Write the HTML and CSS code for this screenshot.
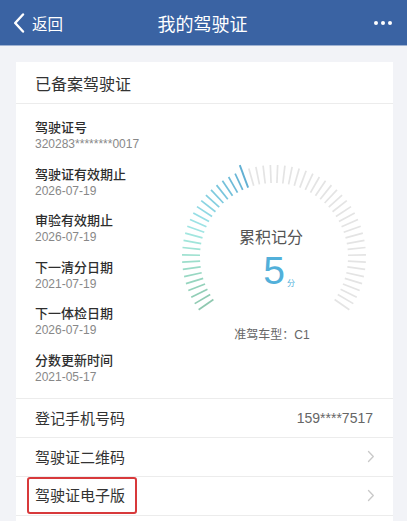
FILE: index.html
```html
<!DOCTYPE html>
<html lang="zh-CN">
<head>
<meta charset="utf-8">
<title>我的驾驶证</title>
<link rel="stylesheet" href="styles.css">
</head>
<body>
<header class="nav">
  <div class="nav-back">
    <svg class="back-icon" viewBox="0 0 12 20" width="12" height="20"><path d="M10 1.5 L2.2 10 L10 18.5" fill="none" stroke="#fff" stroke-width="2.4" stroke-linecap="round" stroke-linejoin="round"/></svg>
    <span>返回</span>
  </div>
  <div class="nav-title">我的驾驶证</div>
  <div class="nav-more"><i></i><i></i><i></i></div>
</header>
<main class="card">
  <div class="card-title">已备案驾驶证</div>
  <section class="info">
    <div class="fields">
      <div class="field"><div class="label">驾驶证号</div><div class="value">320283********0017</div></div>
      <div class="field"><div class="label">驾驶证有效期止</div><div class="value">2026-07-19</div></div>
      <div class="field"><div class="label">审验有效期止</div><div class="value">2026-07-19</div></div>
      <div class="field"><div class="label">下一清分日期</div><div class="value">2021-07-19</div></div>
      <div class="field"><div class="label">下一体检日期</div><div class="value">2026-07-19</div></div>
      <div class="field"><div class="label">分数更新时间</div><div class="value">2021-05-17</div></div>
    </div>
    <div class="gauge">
      <svg viewBox="0 0 200 200" width="200" height="200">
        <defs>
          <line id="t" x1="100" y1="8" x2="100" y2="26" stroke-width="1.7"/>
          <line id="tl" x1="100" y1="2" x2="100" y2="26" stroke-width="1.9"/>
        </defs>
        <g>
          <use href="#t" transform="rotate(-125 100 100)" stroke="#8fc8b0"/>
          <use href="#t" transform="rotate(-120.45 100 100)" stroke="#90cbb3"/>
          <use href="#t" transform="rotate(-115.91 100 100)" stroke="#92ceb7"/>
          <use href="#t" transform="rotate(-111.36 100 100)" stroke="#94d2bb"/>
          <use href="#t" transform="rotate(-106.82 100 100)" stroke="#96d5bf"/>
          <use href="#t" transform="rotate(-102.27 100 100)" stroke="#98d8c3"/>
          <use href="#t" transform="rotate(-97.73 100 100)" stroke="#9adbc7"/>
          <use href="#t" transform="rotate(-93.18 100 100)" stroke="#9cdecb"/>
          <use href="#t" transform="rotate(-88.64 100 100)" stroke="#9ee1d0"/>
          <use href="#t" transform="rotate(-84.09 100 100)" stroke="#a0e3d5"/>
          <use href="#t" transform="rotate(-79.55 100 100)" stroke="#a1e5da"/>
          <use href="#t" transform="rotate(-75 100 100)" stroke="#a2e6df"/>
          <use href="#t" transform="rotate(-70.45 100 100)" stroke="#a0e5e3"/>
          <use href="#t" transform="rotate(-65.91 100 100)" stroke="#9ce2e5"/>
          <use href="#t" transform="rotate(-61.36 100 100)" stroke="#96dee5"/>
          <use href="#t" transform="rotate(-56.82 100 100)" stroke="#90d9e4"/>
          <use href="#t" transform="rotate(-52.27 100 100)" stroke="#8ad4e2"/>
          <use href="#t" transform="rotate(-47.73 100 100)" stroke="#84cfe0"/>
          <use href="#t" transform="rotate(-43.18 100 100)" stroke="#7ecade"/>
          <use href="#t" transform="rotate(-38.64 100 100)" stroke="#78c5dc"/>
          <use href="#t" transform="rotate(-34.09 100 100)" stroke="#73c0da"/>
          <use href="#t" transform="rotate(-29.55 100 100)" stroke="#6ebbd8"/>
          <use href="#t" transform="rotate(-25 100 100)" stroke="#69b6d6"/>
          <use href="#tl" transform="rotate(-20.45 100 100)" stroke="#62b0d3"/>
        </g>
        <g stroke="#e4e4e4">
          <use href="#t" transform="rotate(-15.91 100 100)"/>
          <use href="#t" transform="rotate(-11.36 100 100)"/>
          <use href="#t" transform="rotate(-6.82 100 100)"/>
          <use href="#t" transform="rotate(-2.27 100 100)"/>
          <use href="#t" transform="rotate(2.27 100 100)"/>
          <use href="#t" transform="rotate(6.82 100 100)"/>
          <use href="#t" transform="rotate(11.36 100 100)"/>
          <use href="#t" transform="rotate(15.91 100 100)"/>
          <use href="#t" transform="rotate(20.45 100 100)"/>
          <use href="#t" transform="rotate(25 100 100)"/>
          <use href="#t" transform="rotate(29.55 100 100)"/>
          <use href="#t" transform="rotate(34.09 100 100)"/>
          <use href="#t" transform="rotate(38.64 100 100)"/>
          <use href="#t" transform="rotate(43.18 100 100)"/>
          <use href="#t" transform="rotate(47.73 100 100)"/>
          <use href="#t" transform="rotate(52.27 100 100)"/>
          <use href="#t" transform="rotate(56.82 100 100)"/>
          <use href="#t" transform="rotate(61.36 100 100)"/>
          <use href="#t" transform="rotate(65.91 100 100)"/>
          <use href="#t" transform="rotate(70.45 100 100)"/>
          <use href="#t" transform="rotate(75 100 100)"/>
          <use href="#t" transform="rotate(79.55 100 100)"/>
          <use href="#t" transform="rotate(84.09 100 100)"/>
          <use href="#t" transform="rotate(88.64 100 100)"/>
          <use href="#t" transform="rotate(93.18 100 100)"/>
          <use href="#t" transform="rotate(97.73 100 100)"/>
          <use href="#t" transform="rotate(102.27 100 100)"/>
          <use href="#t" transform="rotate(106.82 100 100)"/>
          <use href="#t" transform="rotate(111.36 100 100)"/>
          <use href="#t" transform="rotate(115.91 100 100)"/>
          <use href="#t" transform="rotate(120.45 100 100)"/>
          <use href="#t" transform="rotate(125 100 100)"/>
        </g>
        <text x="97" y="86" text-anchor="middle" class="g-label">累积记分</text>
        <text x="100" y="127" text-anchor="middle" class="g-num">5</text>
        <text x="113" y="129" class="g-unit">分</text>
        <text x="98" y="182" text-anchor="middle" class="g-type">准驾车型：C1</text>
      </svg>
    </div>
  </section>
  <div class="row">
    <span class="row-label">登记手机号码</span>
    <span class="row-value">159****7517</span>
  </div>
  <div class="row">
    <span class="row-label">驾驶证二维码</span>
    <svg class="chev" viewBox="0 0 8 13" width="8" height="13"><path d="M1.5 1.5 L6.3 6.5 L1.5 11.5" fill="none" stroke="#c9c9c9" stroke-width="1.3" stroke-linecap="round" stroke-linejoin="round"/></svg>
  </div>
  <div class="row">
    <span class="row-label marked">驾驶证电子版</span>
    <svg class="chev" viewBox="0 0 8 13" width="8" height="13"><path d="M1.5 1.5 L6.3 6.5 L1.5 11.5" fill="none" stroke="#c9c9c9" stroke-width="1.3" stroke-linecap="round" stroke-linejoin="round"/></svg>
  </div>
  <div class="row"></div>
</main>
</body>
</html>
```

FILE: styles.css
```css
html, body {
  margin: 0;
  padding: 0;
}
body {
  width: 407px;
  height: 521px;
  overflow: hidden;
  background: #f2f3f7;
  font-family: "Liberation Sans", "Noto Sans CJK SC", sans-serif;
  color: #333;
}
.nav {
  height: 46px;
  box-sizing: border-box;
  background: #3a63a3;
  border-bottom: 1px solid #9fb2d2;
  display: grid;
  grid-template-columns: 1fr auto 1fr;
  align-items: center;
  color: #fff;
  padding: 0 15px 0 13px;
}
.nav-back {
  display: flex;
  align-items: center;
  gap: 7px;
  font-size: 15.5px;
}
.back-icon {
  display: block;
}
.nav-title {
  font-size: 18px;
}
.nav-more {
  justify-self: end;
  display: flex;
  gap: 3px;
}
.nav-more i {
  width: 4px;
  height: 4px;
  border-radius: 50%;
  background: #fff;
}
.card {
  display: block;
  margin: 16px 14px 0 16px;
  background: #fff;
}
.card-title {
  height: 41px;
  padding-left: 19px;
  display: flex;
  align-items: center;
  font-size: 16px;
  color: #333;
  border-bottom: 1px solid #ececec;
}
.info {
  display: grid;
  grid-template-columns: 1fr 200px;
  padding: 16px 19px 13px 19px;
  border-bottom: 1px solid #ececec;
}
.fields {
  display: flex;
  flex-direction: column;
  gap: 14.5px;
}
.label {
  font-size: 13px;
  line-height: 16px;
  font-weight: 500;
  color: #2e2e2e;
}
.value {
  font-size: 12px;
  line-height: 16px;
  color: #888;
}
.gauge {
  align-self: start;
  margin-top: 37px;
}
.gauge svg {
  display: block;
}
.g-label {
  font-family: "Liberation Sans", "Noto Sans CJK SC", sans-serif;
  font-size: 16px;
  fill: #555;
}
.g-num {
  font-family: "Liberation Sans", "Noto Sans CJK SC", sans-serif;
  font-size: 39px;
  fill: #52b0da;
}
.g-unit {
  font-family: "Liberation Sans", "Noto Sans CJK SC", sans-serif;
  font-size: 8px;
  fill: #52b0da;
}
.g-type {
  font-family: "Liberation Sans", "Noto Sans CJK SC", sans-serif;
  font-size: 12px;
  fill: #666;
}
.row {
  height: 38px;
  display: flex;
  align-items: center;
  justify-content: space-between;
  padding: 0 18px 0 19px;
  border-bottom: 1px solid #ececec;
  font-size: 15px;
  color: #333;
}
.row-value {
  font-size: 14px;
  color: #666;
  margin-right: 2px;
}
.chev {
  display: block;
}
.marked {
  margin-left: -8px;
  padding: 7px 10px 7px 6px;
  line-height: 19px;
  border: 2px solid #d8393b;
  border-radius: 3px;
}
```
